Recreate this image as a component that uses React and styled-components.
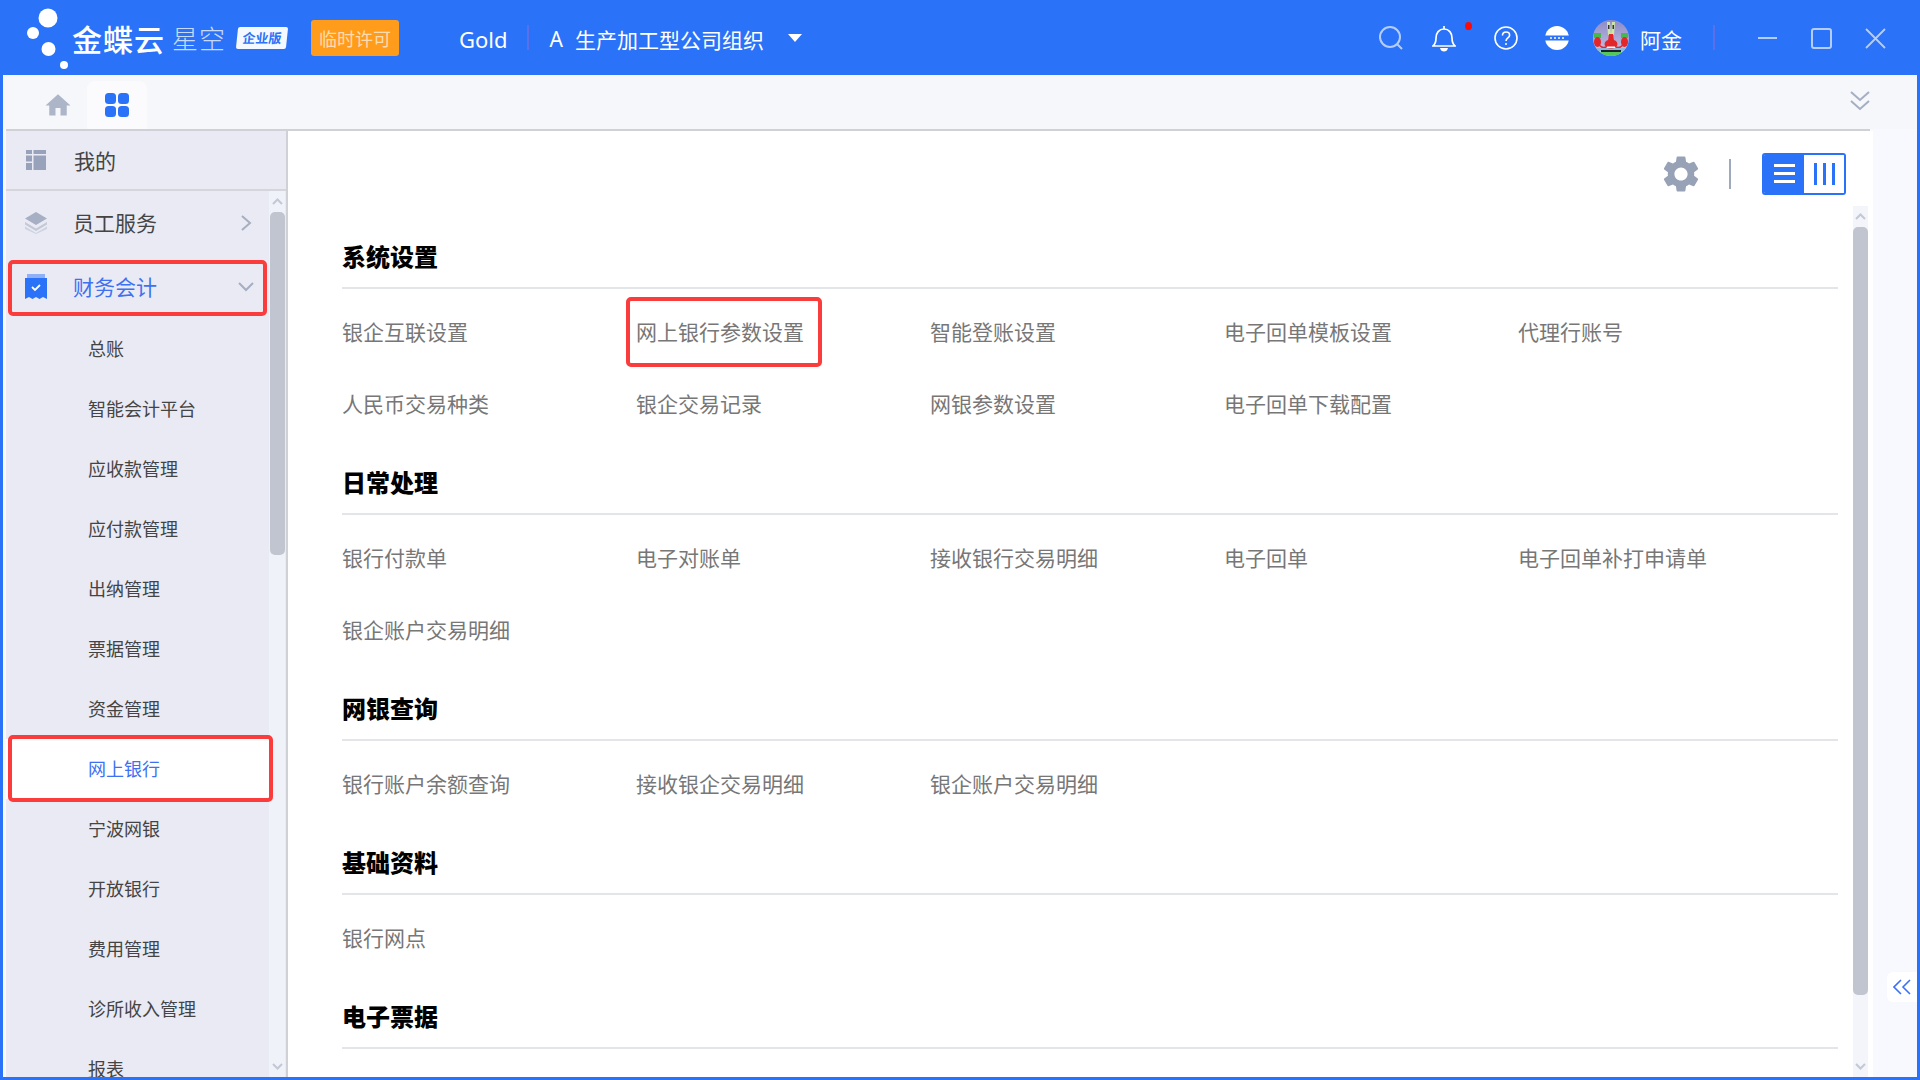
import React from 'react';
import styled, { createGlobalStyle } from 'styled-components';
import { MdHome, MdSettings } from 'react-icons/md';

const GlobalStyle = createGlobalStyle`
  html, body { margin: 0; padding: 0; }
  body { font-family: "Noto Sans CJK SC", "Noto Sans", sans-serif; }
  * { box-sizing: border-box; }
`;

const Window = styled.div`
  width: 1920px;
  height: 1080px;
  background: #2a72f8;
  display: flex;
  flex-direction: column;
  overflow: hidden;
`;

/* ---------- header ---------- */
const Header = styled.header`
  height: 75px;
  flex: none;
  display: flex;
  align-items: center;
  color: #fff;
`;
const LogoMark = styled.svg`
  width: 46px;
  height: 75px;
  margin-left: 26px;
  flex: none;
`;
const LogoName = styled.span`
  font-size: 30px;
  line-height: 36px;
  font-weight: 500;
  letter-spacing: 1px;
  width: 100px;
  white-space: nowrap;
`;
const LogoSub = styled.span`
  font-size: 26px;
  line-height: 36px;
  font-weight: 300;
  letter-spacing: 1px;
  color: #c6dafc;
  width: 65px;
  white-space: nowrap;
`;
const EditionTag = styled.span`
  width: 50px;
  height: 22px;
  background: #f4f8ff;
  color: #2a72f8;
  font-size: 13px;
  line-height: 22px;
  font-weight: 700;
  text-align: center;
  transform: skewX(-6deg);
  border-radius: 2px;
  white-space: nowrap;
`;
const LicenseTag = styled.span`
  width: 88px;
  height: 36px;
  margin-left: 24px;
  background: #ff9c1c;
  color: #ffdcae;
  border-radius: 3px;
  font-size: 18px;
  line-height: 36px;
  text-align: center;
  white-space: nowrap;
`;
const HeaderText = styled.span`
  font-size: ${p => p.$size || 21}px;
  margin-left: ${p => p.$ml || 0}px;
  margin-top: 2px;
  line-height: 30px;
  white-space: nowrap;
  font-family: ${p => p.$latin ? '"Noto Sans", sans-serif' : 'inherit'};
`;
const Rule = styled.span`
  width: 2px;
  height: 25px;
  flex: none;
  background: #5a6fe8;
  margin-left: ${p => p.$ml || 0}px;
`;
const Caret = styled.span`
  width: 0;
  height: 0;
  margin-left: 24px;
  margin-top: 1px;
  border-left: 7px solid transparent;
  border-right: 7px solid transparent;
  border-top: 8px solid #fff;
`;
const HeaderIcon = styled.span`
  display: flex;
  position: relative;
  flex: none;
  margin-left: ${p => p.$ml || 0}px;
  margin-top: 1px;
  opacity: ${p => p.$dim ? 0.65 : 1};
  svg { display: block; }
`;
const RedDot = styled.i`
  position: absolute;
  top: -3px;
  right: -16px;
  width: 7px;
  height: 8px;
  border-radius: 50%;
  background: #fb0a0a;
`;

/* ---------- tab bar ---------- */
const TabBar = styled.div`
  height: 54px;
  flex: none;
  margin: 0 3px;
  padding: 6px 47px 0 42px;
  background: #f5f7fb;
  display: flex;
  align-items: flex-start;
  color: #adb6c9;
`;
const HomeIcon = styled.span`
  width: 30px;
  height: 48px;
  margin-left: -2px;
  display: flex;
  align-items: center;
  justify-content: center;
  font-size: 33px;
`;
const ActiveTab = styled.div`
  width: 60px;
  height: 48px;
  margin-left: 14px;
  background: #fbfbfd;
  border-radius: 8px 8px 0 0;
  display: flex;
  align-items: center;
  justify-content: center;
`;
const CollapseTabs = styled.span`
  margin-left: auto;
  margin-top: 10px;
  display: flex;
`;

/* ---------- body ---------- */
const Body = styled.div`
  flex: 1;
  min-height: 0;
  margin: 0 3px 3px;
  padding-left: 3px;
  background: #f8f9fe;
  display: flex;
`;
const Main = styled.div`
  width: 1867px;
  flex: none;
  display: flex;
  flex-direction: column;
  min-height: 0;
`;
const TopLine = styled.div`
  width: 1864px;
  height: 2px;
  flex: none;
  background: #cfd1d6;
`;
const MainRow = styled.div`
  flex: 1;
  min-height: 0;
  display: flex;
  background: #fff;
`;
const SideStrip = styled.div`
  flex: 1;
  padding-top: 843px;
  display: flex;
  flex-direction: column;
  align-items: flex-end;
`;
const ExpandButton = styled.div`
  width: 30px;
  height: 30px;
  background: #fff;
  border-radius: 6px 0 0 6px;
  display: flex;
  align-items: center;
  justify-content: center;
`;

/* ---------- sidebar ---------- */
const Sidebar = styled.aside`
  width: 282px;
  flex: none;
  border-right: 2px solid #cfd1d6;
  background: #e9eaf3;
  display: flex;
  flex-direction: column;
  min-height: 0;
  overflow: hidden;
`;
const MineRow = styled.div`
  height: 60px;
  flex: none;
  border-bottom: 2px solid #d5d6dc;
  display: flex;
  align-items: center;
  padding-left: 19px;
  color: #444;
  font-size: 21px;
`;
const GroupIcon = styled.span`
  width: 22px;
  display: flex;
  justify-content: center;
  margin-right: ${p => p.$mr || 26}px;
  flex: none;
`;
const SideScroll = styled.div`
  flex: 1;
  min-height: 0;
  display: flex;
  overflow: hidden;
`;
const Menu = styled.div`
  width: 263px;
  flex: none;
`;
const GroupRow = styled.div`
  position: relative;
  height: 64px;
  padding: 0 14px 0 19px;
  display: flex;
  align-items: center;
  font-size: 21px;
  color: ${p => p.$active ? '#3d71f2' : '#444'};
`;
const GroupLabel = styled.span`
  margin-top: -2px;
`;
const Arrow = styled.span`
  margin-left: auto;
  margin-right: ${p => p.$mr || 0}px;
  display: flex;
`;
const SubRow = styled.div`
  position: relative;
  height: 60px;
  padding: 0 0 2px 82px;
  display: flex;
  align-items: center;
  font-size: 18px;
  color: ${p => p.$active ? '#3d71f2' : '#444'};
  background: ${p => p.$active ? '#fff' : 'transparent'};
`;
const Callout = styled.i`
  position: absolute;
  top: ${p => p.$t}px;
  bottom: ${p => p.$b}px;
  left: ${p => p.$l}px;
  right: ${p => p.$r}px;
  border: 4px solid #fb3c3c;
  border-radius: 5px;
  pointer-events: none;
  z-index: 2;
`;
const ScrollTrack = styled.div`
  width: ${p => p.$w}px;
  flex: none;
  background: ${p => p.$bg};
  display: flex;
  flex-direction: column;
  align-items: center;
  margin-left: ${p => p.$ml || 0}px;
`;
const ScrollEnd = styled.span`
  height: ${p => p.$h}px;
  flex: none;
  display: flex;
  align-items: center;
  justify-content: center;
  margin-top: ${p => p.$auto ? 'auto' : 0};
`;
const ScrollThumb = styled.div`
  width: 15px;
  height: ${p => p.$h}px;
  flex: none;
  background: #c1c5cf;
  border-radius: 5px;
`;

/* ---------- content ---------- */
const Content = styled.main`
  flex: 1;
  min-width: 0;
  display: flex;
  flex-direction: column;
  padding-left: 54px;
`;
const Toolbar = styled.div`
  height: 75px;
  flex: none;
  padding: 22px 27px 0 0;
  display: flex;
  align-items: flex-start;
  justify-content: flex-end;
`;
const GearButton = styled.span`
  height: 42px;
  margin-right: -1px;
  display: flex;
  align-items: center;
  font-size: 44px;
  color: #98a2b6;
`;
const ToolRule = styled.span`
  width: 2px;
  height: 30px;
  margin: 6px 31px 0 27px;
  background: #a0a9bd;
`;
const ViewToggle = styled.div`
  width: 84px;
  height: 42px;
  display: flex;
  border: 2px solid #2a72f8;
  border-radius: 3px;
  overflow: hidden;
`;
const ViewOption = styled.span`
  flex: 1;
  display: flex;
  align-items: center;
  justify-content: center;
  background: ${p => p.$on ? '#2a72f8' : '#fff'};
`;
const ContentRow = styled.div`
  flex: 1;
  min-height: 0;
  display: flex;
  overflow: hidden;
`;
const Sections = styled.div`
  width: 1496px;
  flex: none;
  padding-top: 9px;
`;
const SectionTitle = styled.h3`
  height: 74px;
  margin: 0 0 8px;
  padding-bottom: 14px;
  display: flex;
  align-items: flex-end;
  border-bottom: 2px solid #e4e5e8;
  font-size: 24px;
  line-height: 34px;
  font-weight: 900;
  color: #000;
`;
const LinkGrid = styled.div`
  display: grid;
  grid-template-columns: repeat(5, 294px);
  grid-auto-rows: 72px;
`;
const LinkItem = styled.div`
  position: relative;
  display: flex;
  align-items: center;
  padding-bottom: 5px;
  font-size: 21px;
  color: #777;
  white-space: nowrap;
`;

const sections = [
  { title: '系统设置', links: ['银企互联设置', '网上银行参数设置', '智能登账设置', '电子回单模板设置', '代理行账号', '人民币交易种类', '银企交易记录', '网银参数设置', '电子回单下载配置'] },
  { title: '日常处理', links: ['银行付款单', '电子对账单', '接收银行交易明细', '电子回单', '电子回单补打申请单', '银企账户交易明细'] },
  { title: '网银查询', links: ['银行账户余额查询', '接收银企交易明细', '银企账户交易明细'] },
  { title: '基础资料', links: ['银行网点'] },
  { title: '电子票据', links: [] },
];

const subMenu = ['总账', '智能会计平台', '应收款管理', '应付款管理', '出纳管理', '票据管理', '资金管理', '网上银行', '宁波网银', '开放银行', '费用管理', '诊所收入管理', '报表'];

const Chevron = ({ dir = 'up', color = '#c3c8d4', w = 11, h = 7, sw = 2 }) => {
  const pts = { up: '1,6 5.5,1.5 10,6', down: '1,1 5.5,5.5 10,1' }[dir];
  return (
    <svg width={w} height={h} viewBox="0 0 11 7" fill="none">
      <polyline points={pts} stroke={color} strokeWidth={sw} />
    </svg>
  );
};

const Avatar = () => (
  <svg width="36" height="36" viewBox="0 0 36 36">
    <defs>
      <clipPath id="av"><circle cx="18" cy="18" r="18" /></clipPath>
      <linearGradient id="avbg" x1="0" y1="0" x2="0" y2="1">
        <stop offset="0" stopColor="#8d8ac6" />
        <stop offset="1" stopColor="#c9c8e6" />
      </linearGradient>
    </defs>
    <g clipPath="url(#av)">
      <rect width="36" height="36" fill="url(#avbg)" />
      <path d="M14 2l3 0 1 13-3 0z" fill="#cfe6a8" />
      <path d="M19 2l3 0-1 13-3 0z" fill="#cfe6a8" />
      <rect x="15" y="5" width="1.500" height="4" fill="#333" />
      <rect x="19.500" y="5" width="1.500" height="4" fill="#333" />
      <rect x="1" y="13" width="7" height="5" fill="#46b84c" />
      <rect x="28" y="13" width="7" height="5" fill="#46b84c" />
      <ellipse cx="4.500" cy="22" rx="3.500" ry="5" fill="#e3262a" />
      <ellipse cx="31.500" cy="22" rx="3.500" ry="5" fill="#e3262a" />
      <path d="M6 25c3 3 5 3 7 2M30 25c-3 3-5 3-7 2" stroke="#e3262a" strokeWidth="1.500" fill="none" />
      <path d="M3 28h30v3H3z" fill="#8fb7dc" />
      <path d="M8 30h20v3H8z" fill="#17202c" />
      <path d="M0 32h36v4H0z" fill="#55c65a" />
      <ellipse cx="18" cy="24" rx="6.500" ry="4.500" fill="#e3262a" />
      <path d="M15 21h6l-1-7h-4z" fill="#e3262a" />
      <rect x="14" y="26.500" width="8" height="1.500" fill="#fff" />
    </g>
  </svg>
);

export default function App() {
  return (
    <Window>
      <GlobalStyle />
      <Header>
        <LogoMark viewBox="0 0 46 75">
          <circle cx="22" cy="18" r="9.500" fill="#fff" />
          <circle cx="7" cy="33" r="6" fill="#fff" />
          <circle cx="22.500" cy="49" r="7" fill="#fff" />
          <circle cx="38" cy="65" r="4" fill="#fff" />
        </LogoMark>
        <LogoName>金蝶云</LogoName>
        <LogoSub>星空</LogoSub>
        <EditionTag>企业版</EditionTag>
        <LicenseTag>临时许可</LicenseTag>
        <HeaderText $latin $size={22} $ml={60}>Gold</HeaderText>
        <Rule $ml={19} />
        <HeaderText $latin $ml={21}>A</HeaderText>
        <HeaderText $ml={12}>生产加工型公司组织</HeaderText>
        <Caret />

        <HeaderIcon $ml={577} $dim>
          <svg width="24" height="24" viewBox="0 0 24 24" fill="none" stroke="#fff" strokeWidth="2">
            <circle cx="11" cy="11" r="10" />
            <path d="M18 18l5 5" />
          </svg>
        </HeaderIcon>
        <HeaderIcon $ml={29}>
          <svg width="24" height="27" viewBox="0 0 24 27" fill="none" stroke="#fff" strokeWidth="1.700">
            <path d="M1 21h22c-2.500-2-3-4-3-8 0-5-3-9-8-9s-8 4-8 9c0 4-.5 6-3 8z" />
            <path d="M12 1v3" />
            <path d="M8 23h8c-.5 2.500-2 3.500-4 3.500S8.500 25.500 8 23z" fill="#fff" stroke="none" />
          </svg>
          <RedDot />
        </HeaderIcon>
        <HeaderIcon $ml={38}>
          <svg width="24" height="24" viewBox="0 0 24 24" fill="none" stroke="#fff" strokeWidth="1.600">
            <circle cx="12" cy="12" r="11" />
            <path d="M8.500 9.500c0-2.200 1.600-3.500 3.600-3.500s3.500 1.300 3.500 3.200c0 2.800-3.600 2.800-3.600 5.800" />
            <circle cx="12" cy="18" r="1" fill="#fff" stroke="none" />
          </svg>
        </HeaderIcon>
        <HeaderIcon $ml={27}>
          <svg width="24" height="24" viewBox="0 0 24 24">
            <circle cx="12" cy="12" r="12" fill="#fff" />
            <rect x="0" y="9.500" width="24" height="5" fill="#2a72f8" />
            <g fill="#fff">
              <circle cx="6" cy="12" r="1" />
              <circle cx="10" cy="12" r="1" />
              <circle cx="14" cy="12" r="1" />
              <circle cx="18" cy="12" r="1" />
            </g>
          </svg>
        </HeaderIcon>
        <HeaderIcon $ml={24}><Avatar /></HeaderIcon>
        <HeaderText $ml={11}>阿金</HeaderText>
        <Rule $ml={31} />
        <HeaderIcon $ml={43} $dim>
          <svg width="19" height="2" viewBox="0 0 19 2"><rect width="19" height="2" fill="#fff" /></svg>
        </HeaderIcon>
        <HeaderIcon $ml={34} $dim>
          <svg width="21" height="21" viewBox="0 0 21 21" fill="none" stroke="#fff" strokeWidth="2">
            <rect x="1" y="1" width="19" height="19" rx="2" />
          </svg>
        </HeaderIcon>
        <HeaderIcon $ml={33} $dim>
          <svg width="21" height="21" viewBox="0 0 21 21" fill="none" stroke="#fff" strokeWidth="1.800">
            <path d="M1 1l19 19M20 1L1 20" />
          </svg>
        </HeaderIcon>
      </Header>

      <TabBar>
        <HomeIcon><MdHome /></HomeIcon>
        <ActiveTab>
          <svg width="24" height="24" viewBox="0 0 24 24" fill="#2a72f8">
            <rect width="11" height="11" rx="3.500" />
            <rect x="13" width="11" height="11" rx="3.500" />
            <rect y="13" width="11" height="11" rx="3.500" />
            <rect x="13" y="13" width="11" height="11" rx="3.500" />
          </svg>
        </ActiveTab>
        <CollapseTabs>
          <svg width="20" height="20" viewBox="0 0 20 20" fill="none" stroke="#a5aec2" strokeWidth="2">
            <path d="M1 1l9 8 9-8M1 10l9 8 9-8" />
          </svg>
        </CollapseTabs>
      </TabBar>

      <Body>
        <Main>
          <TopLine />
          <MainRow>
            <Sidebar>
              <MineRow>
                <GroupIcon $mr={27}>
                  <svg width="20" height="20" viewBox="0 0 20 20" fill="#98a3bb">
                    <rect width="6" height="4" />
                    <rect x="7.500" width="12.500" height="4" />
                    <rect y="5.500" width="6" height="6" />
                    <rect y="13" width="6" height="7" />
                    <rect x="7.500" y="5.500" width="12.500" height="14.500" />
                  </svg>
                </GroupIcon>
                我的
              </MineRow>
              <SideScroll>
                <Menu>
                  <GroupRow>
                    <GroupIcon>
                      <svg width="22" height="22" viewBox="0 0 22 22">
                        <path d="M11 0l11 6.500L11 13 0 6.500z" fill="#a6afc3" />
                        <path d="M0 10l11 6.500L22 10v2.500L11 19 0 12.500z" fill="#c3c9d6" />
                        <path d="M0 14.500L11 21l11-6.500V17l-11 5-11-5z" fill="#ced3de" />
                      </svg>
                    </GroupIcon>
                    <GroupLabel>员工服务</GroupLabel>
                    <Arrow $mr={3}>
                      <svg width="11" height="16" viewBox="0 0 11 16" fill="none" stroke="#a5aec2" strokeWidth="2">
                        <path d="M1 1l8 7-8 7" />
                      </svg>
                    </Arrow>
                  </GroupRow>
                  <GroupRow $active>
                    <GroupIcon>
                      <svg width="22" height="26" viewBox="0 0 22 26">
                        <rect x="2" width="18" height="4" fill="#8fb0f6" />
                        <path d="M0 4h22v21l-4-2-3.500 2-3.500-2-3.500 2L4 23l-4 2z" fill="#2a72f8" />
                        <path d="M7 13l3 3 5-5" fill="none" stroke="#fff" strokeWidth="1.800" />
                      </svg>
                    </GroupIcon>
                    <GroupLabel>财务会计</GroupLabel>
                    <Arrow $mr={1}>
                      <svg width="16" height="10" viewBox="0 0 16 10" fill="none" stroke="#a5aec2" strokeWidth="2">
                        <path d="M1 1l7 7 7-7" />
                      </svg>
                    </Arrow>
                    <Callout $t={5} $b={3} $l={2} $r={2} />
                  </GroupRow>
                  {subMenu.map(name => (
                    <SubRow key={name} $active={name === '网上银行'}>
                      {name}
                      {name === '网上银行' && <Callout $t={-4} $b={-3} $l={2} $r={-4} />}
                    </SubRow>
                  ))}
                </Menu>
                <ScrollTrack $w={16} $bg="#f0f2fa">
                  <ScrollEnd $h={21}><Chevron /></ScrollEnd>
                  <ScrollThumb $h={343} />
                  <ScrollEnd $h={22} $auto><Chevron dir="down" /></ScrollEnd>
                </ScrollTrack>
              </SideScroll>
            </Sidebar>

            <Content>
              <Toolbar>
                <GearButton><MdSettings /></GearButton>
                <ToolRule />
                <ViewToggle>
                  <ViewOption $on>
                    <svg width="21" height="20" viewBox="0 0 21 20" fill="#fff">
                      <rect width="21" height="3" />
                      <rect y="8" width="21" height="3" />
                      <rect y="16" width="21" height="3" />
                    </svg>
                  </ViewOption>
                  <ViewOption>
                    <svg width="21" height="22" viewBox="0 0 21 22" fill="#2a72f8">
                      <rect width="3" height="22" />
                      <rect x="9" width="3" height="22" />
                      <rect x="18" width="3" height="22" />
                    </svg>
                  </ViewOption>
                </ViewToggle>
              </Toolbar>
              <ContentRow>
                <Sections>
                  {sections.map(sec => (
                    <section key={sec.title}>
                      <SectionTitle>{sec.title}</SectionTitle>
                      <LinkGrid>
                        {sec.links.map(link => (
                          <LinkItem key={link}>
                            {link}
                            {link === '网上银行参数设置' && <Callout $t={0} $b={2} $l={-10} $r={108} />}
                          </LinkItem>
                        ))}
                      </LinkGrid>
                    </section>
                  ))}
                </Sections>
                <ScrollTrack $w={15} $ml={15} $bg="#f3f5fb">
                  <ScrollEnd $h={21}><Chevron /></ScrollEnd>
                  <ScrollThumb $h={768} />
                  <ScrollEnd $h={22} $auto><Chevron dir="down" /></ScrollEnd>
                </ScrollTrack>
              </ContentRow>
            </Content>
          </MainRow>
        </Main>
        <SideStrip>
          <ExpandButton>
            <svg width="18" height="16" viewBox="0 0 18 16" fill="none" stroke="#3d71f2" strokeWidth="1.600">
              <path d="M8 1L1 8l7 7M17 1l-7 7 7 7" />
            </svg>
          </ExpandButton>
        </SideStrip>
      </Body>
    </Window>
  );
}
